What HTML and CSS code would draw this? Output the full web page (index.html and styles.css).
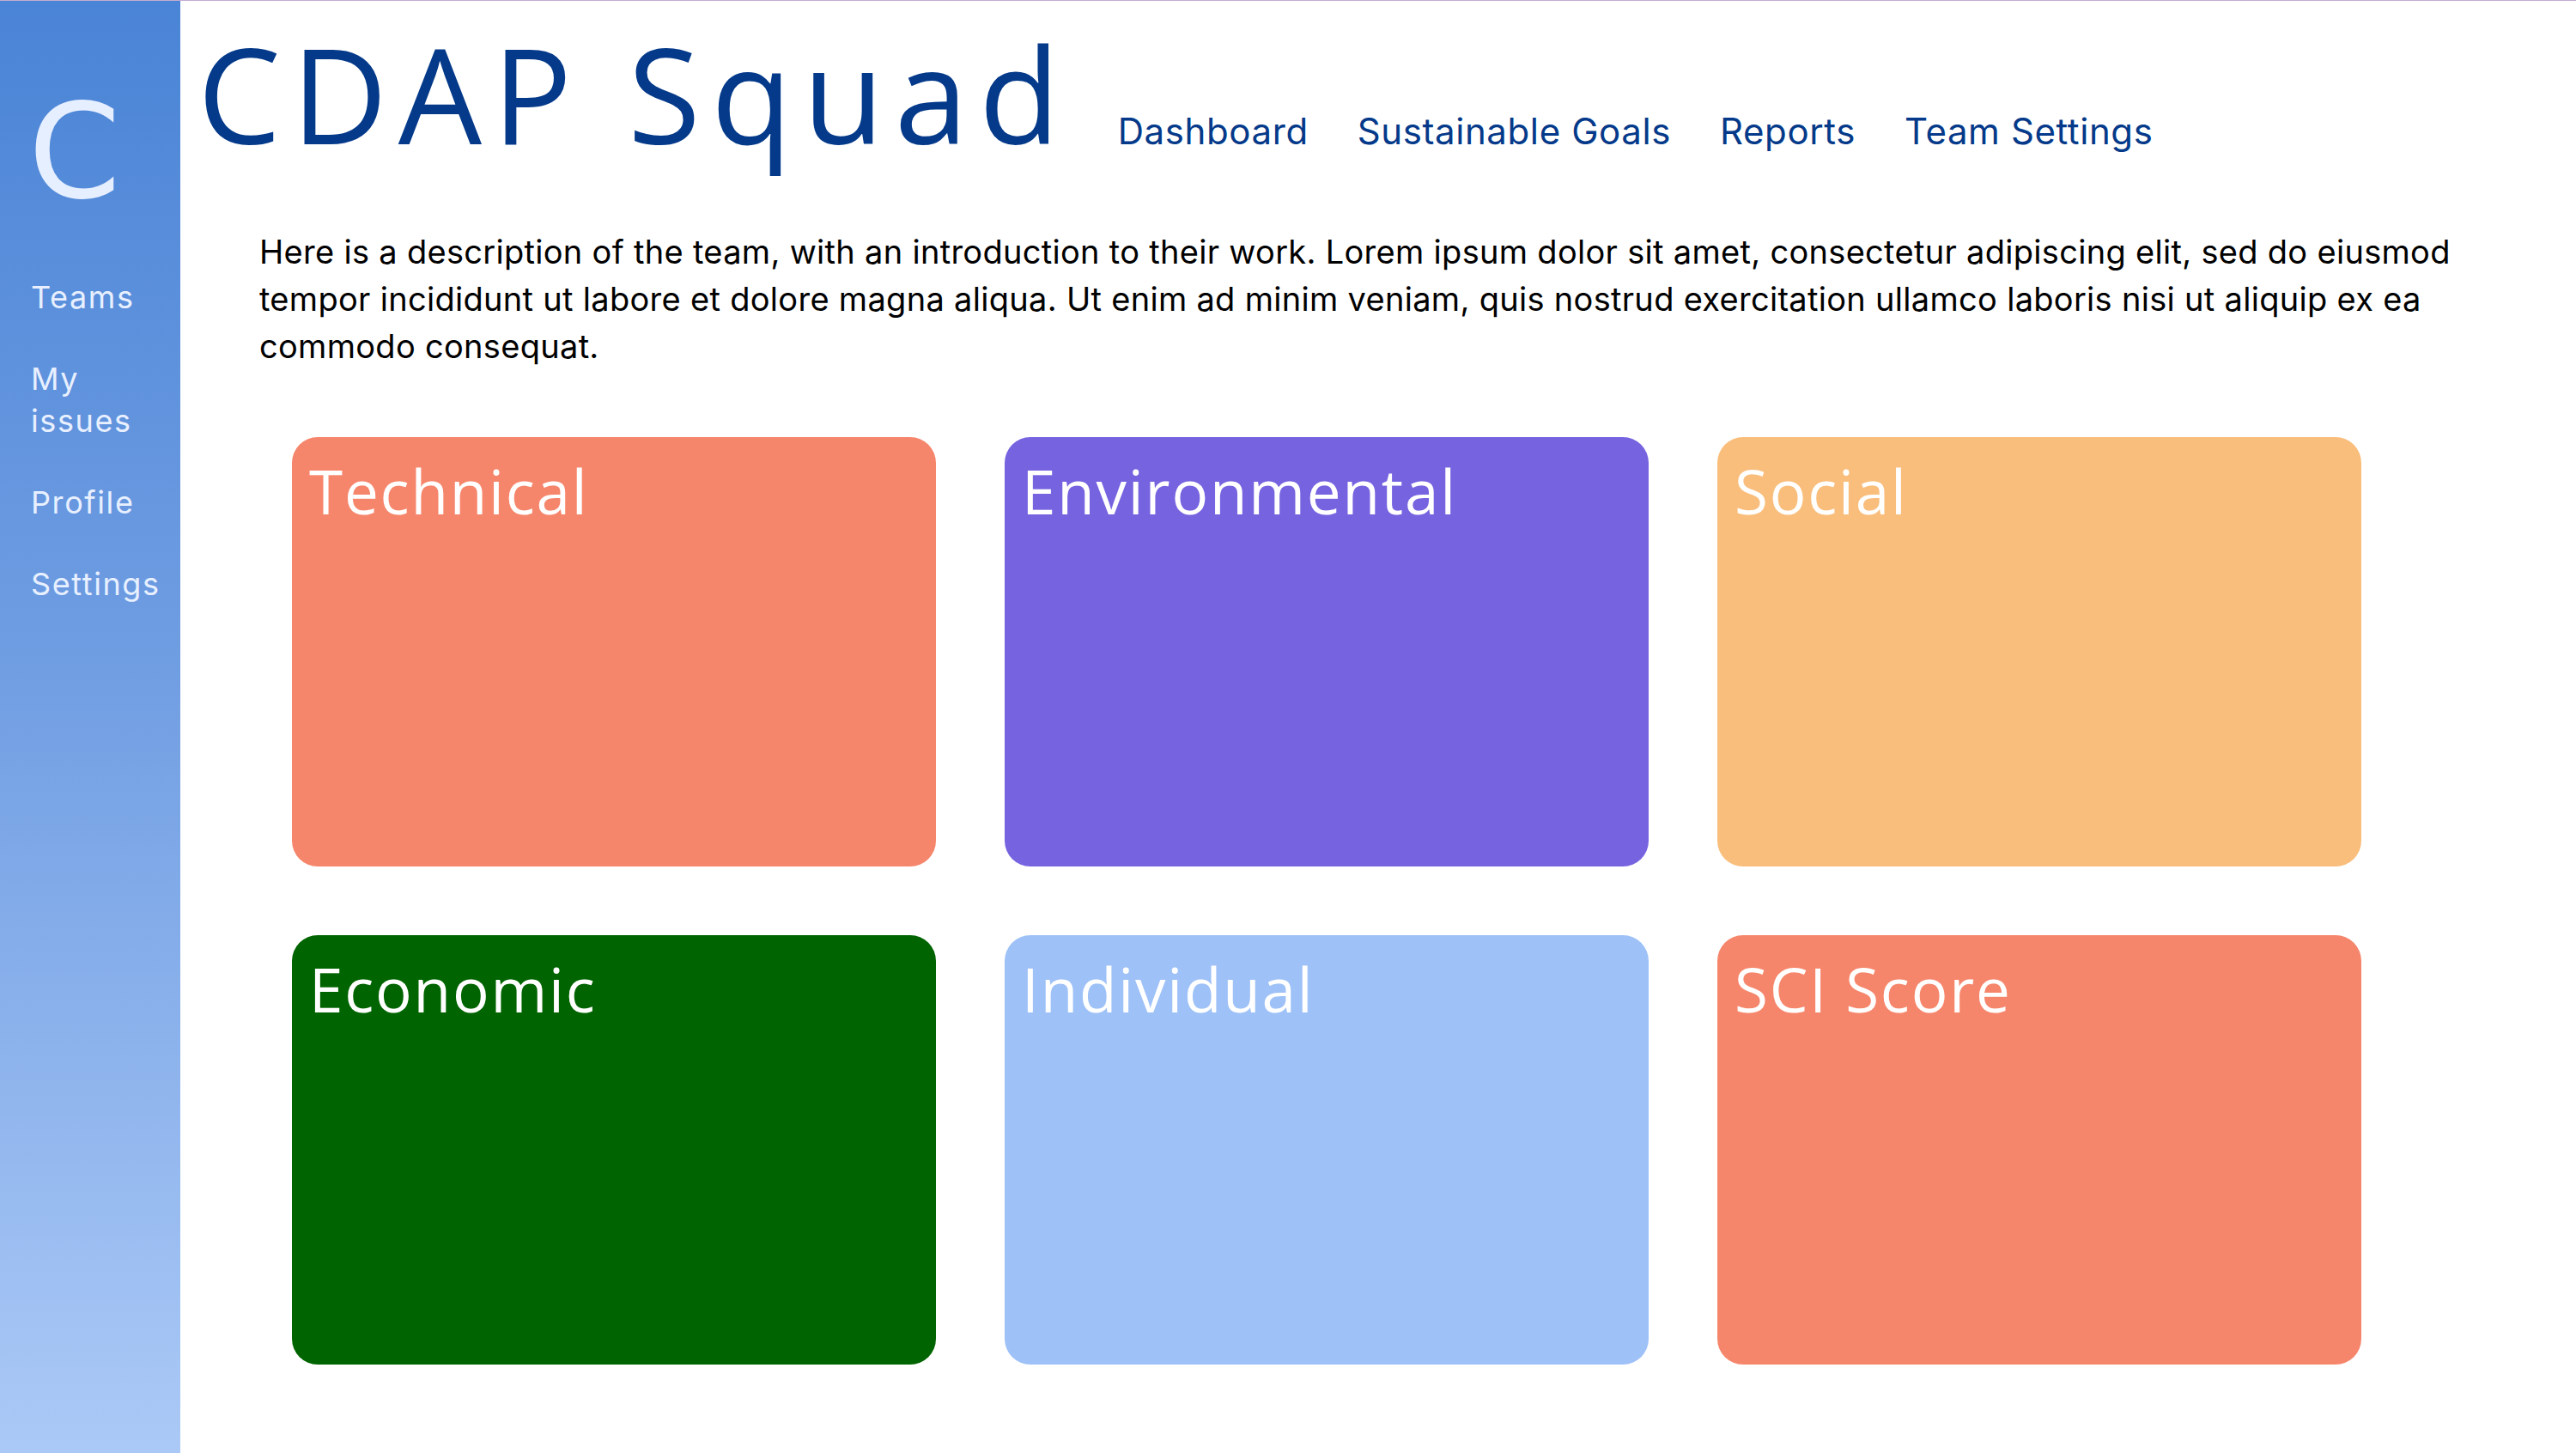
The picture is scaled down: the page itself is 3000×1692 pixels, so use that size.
FILE: index.html
```html
<!DOCTYPE html>
<html lang="en">
<head>
<meta charset="utf-8">
<title>CDAP Squad</title>
<link rel="stylesheet" href="styles.css">
</head>
<body>
<div class="app">
  <aside class="sidebar">
    <div class="logo">C</div>
    <nav class="side-nav">
      <a class="side-link" href="#">Teams</a>
      <a class="side-link" href="#">My issues</a>
      <a class="side-link" href="#">Profile</a>
      <a class="side-link" href="#">Settings</a>
    </nav>
  </aside>
  <main class="main">
    <header class="header">
      <h1 class="title">CDAP Squad</h1>
      <nav class="top-nav">
        <a class="top-link" href="#">Dashboard</a>
        <a class="top-link" href="#">Sustainable Goals</a>
        <a class="top-link" href="#">Reports</a>
        <a class="top-link" href="#">Team Settings</a>
      </nav>
    </header>
    <p class="description">Here is a description of the team, with an introduction to their work. Lorem ipsum dolor sit amet, consectetur adipiscing elit, sed do eiusmod tempor incididunt ut labore et dolore magna aliqua. Ut enim ad minim veniam, quis nostrud exercitation ullamco laboris nisi ut aliquip ex ea commodo consequat.</p>
    <section class="cards">
      <div class="card card-technical"><h2 class="card-title">Technical</h2></div>
      <div class="card card-environmental"><h2 class="card-title">Environmental</h2></div>
      <div class="card card-social"><h2 class="card-title">Social</h2></div>
      <div class="card card-economic"><h2 class="card-title">Economic</h2></div>
      <div class="card card-individual"><h2 class="card-title">Individual</h2></div>
      <div class="card card-sci"><h2 class="card-title">SCI Score</h2></div>
    </section>
  </main>
</div>
</body>
</html>
```
FILE: styles.css
```css
* { box-sizing: border-box; }

html, body {
  margin: 0;
  padding: 0;
  background: #ffffff;
}

body {
  border-top: 1px solid #c3acd0;
}

.app {
  display: flex;
  min-height: 1691px;
}

.sidebar {
  width: 210px;
  flex: 0 0 210px;
  background: linear-gradient(180deg, #4a84d6 0%, #6f9de2 45%, #abc9f6 100%);
  padding-left: 33px;
  padding-top: 99px;
}

.logo {
  font-family: "DejaVu Sans", sans-serif;
  font-size: 154px;
  line-height: 1;
  color: #e6efff;
  height: 200px;
}

.side-nav {
  display: flex;
  flex-direction: column;
  gap: 46px;
  padding-left: 3px;
  padding-right: 4px;
  margin-top: 22px;
}

.side-link {
  font-family: "Inter", sans-serif;
  font-size: 36px;
  line-height: 49px;
  letter-spacing: 1.6px;
  color: #e8f0ff;
  text-decoration: none;
}

.main {
  flex: 1;
  display: flex;
  flex-direction: column;
}

.header {
  display: flex;
  align-items: baseline;
  padding-left: 20px;
  padding-top: 7px;
}

.title {
  font-family: "Open Sans", sans-serif;
  font-weight: 400;
  font-size: 154px;
  line-height: 200px;
  letter-spacing: 12.5px;
  color: #053a8a;
  margin: 0;
}

.top-nav {
  display: flex;
  gap: 57px;
  margin-left: 55px;
}

.top-link {
  font-family: "Inter", sans-serif;
  font-size: 42px;
  letter-spacing: 0.6px;
  color: #053a8a;
  text-decoration: none;
}

.description {
  font-family: "Inter", sans-serif;
  font-size: 38px;
  line-height: 55px;
  letter-spacing: 0.3px;
  color: #000000;
  margin: 58px 92px 0 92px;
}

.cards {
  display: grid;
  grid-template-columns: repeat(3, 750px);
  grid-auto-rows: 500px;
  gap: 80px;
  margin: 78px 0 0 130px;
}

.card {
  border-radius: 30px;
  padding: 20px 20px;
}

.card-title {
  font-family: "Open Sans", sans-serif;
  font-weight: 500;
  font-size: 71px;
  line-height: 1.2;
  letter-spacing: 1.8px;
  color: #ffffff;
  margin: 0;
}

.card-technical { background: #f6866b; }
.card-environmental { background: #7663e0; }
.card-social { background: #f9be7c; }
.card-economic { background: #006400; }
.card-individual { background: #9ec1f7; }
.card-sci { background: #f6866b; }
```
